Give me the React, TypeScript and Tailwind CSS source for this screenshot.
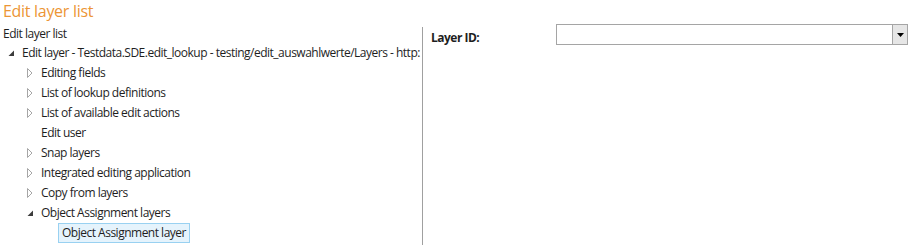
import React from "react";

interface TreeNode {
    label: string;
    state: "open" | "closed" | "leaf";
    depth: number;
    selected?: boolean;
}

const nodes: TreeNode[] = [
    { label: "Edit layer - Testdata.SDE.edit_lookup - testing/edit_auswahlwerte/Layers - http:", state: "open", depth: 0 },
    { label: "Editing fields", state: "closed", depth: 1 },
    { label: "List of lookup definitions", state: "closed", depth: 1 },
    { label: "List of available edit actions", state: "closed", depth: 1 },
    { label: "Edit user", state: "leaf", depth: 1 },
    { label: "Snap layers", state: "closed", depth: 1 },
    { label: "Integrated editing application", state: "closed", depth: 1 },
    { label: "Copy from layers", state: "closed", depth: 1 },
    { label: "Object Assignment layers", state: "open", depth: 1 },
    { label: "Object Assignment layer", state: "leaf", depth: 2, selected: true },
];

const Expander: React.FC<{ state: TreeNode["state"] }> = ({ state }) => {
    if (state === "open") {
        return (
            <svg width="16" height="20" viewBox="0 0 16 20" className="shrink-0">
                <path d="M11 7.5 L11 13 L5.5 13 Z" fill="#3c3c3c" />
            </svg>
        );
    }
    if (state === "closed") {
        return (
            <svg width="16" height="20" viewBox="0 0 16 20" className="shrink-0">
                <path d="M5.5 5.5 L5.5 14.5 L10 10 Z" fill="none" stroke="#a6a6a6" strokeWidth="1" />
            </svg>
        );
    }
    return <span className="w-4 shrink-0" />;
};

const App: React.FC = () => {
    return (
        <div className="w-[913px] h-[245px] bg-white overflow-hidden text-[12px] tracking-[-0.5px] text-[#1e1e1e]" style={{ fontFamily: '"Open Sans", "Noto Sans", sans-serif' }}>
            <div className="h-6 pl-[3px] text-[16px] leading-[22px] tracking-[-0.3px] text-[#ec9535]">Edit layer list</div>
            <div className="flex h-[221px]">
                <div className="w-[422px] shrink-0 pr-1">
                    <div className="h-[19px] pl-[3px] leading-[18px] pt-[1px]">Edit layer list</div>
                    <div className="flex flex-col">
                        {nodes.map((n, i) => (
                            <div key={i} className="flex items-center h-5 whitespace-nowrap" style={{ paddingLeft: 3 + n.depth * 19 }}>
                                <Expander state={n.state} />
                                {n.selected ? (
                                    <span className="ml-[1px] h-5 px-[3px] leading-[18px] border border-[#99d1f1] bg-[#e5f3fc]">{n.label}</span>
                                ) : (
                                    <span className="ml-[3px]">{n.label}</span>
                                )}
                            </div>
                        ))}
                    </div>
                </div>
                <div className="w-px bg-[#a0a0a0] mt-[3px] shrink-0" />
                <div className="flex-1 flex items-start">
                    <div className="w-[133px] pl-2 pt-[5px] font-bold">Layer ID:</div>
                    <div className="flex w-[352px] h-[21px] border border-[#a5a5a5] bg-white">
                        <div className="flex-1" />
                        <div className="w-[15px] border-l border-[#a5a5a5] bg-[#e6e6e6] flex items-center justify-center">
                            <svg width="7" height="4" viewBox="0 0 7 4">
                                <path d="M0 0 L7 0 L3.5 4 Z" fill="#000" />
                            </svg>
                        </div>
                    </div>
                </div>
            </div>
        </div>
    );
};

export default App;
